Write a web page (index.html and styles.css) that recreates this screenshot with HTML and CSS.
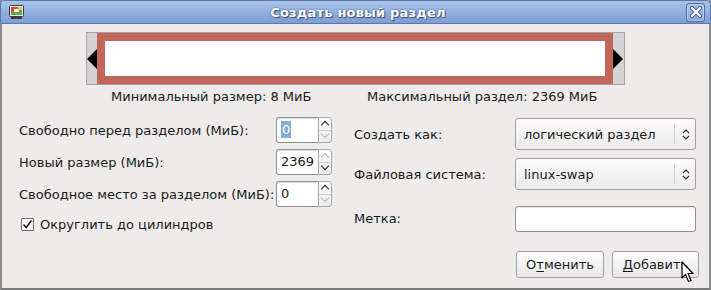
FILE: index.html
```html
<!DOCTYPE html>
<html>
<head>
<meta charset="utf-8">
<link rel="stylesheet" href="styles.css">
</head>
<body>
<div class="window">
  <div class="titlebar">
    <svg class="app-icon" width="15" height="14" viewBox="0 0 15 14">
      <rect x="0.5" y="0.5" width="14" height="11" rx="1" fill="#e8e8e8" stroke="#3a3a3a"/>
      <rect x="2" y="2" width="11" height="8" fill="#5fa84a"/>
      <rect x="2" y="2" width="6" height="5" fill="#d9493a"/>
      <rect x="5" y="4" width="5" height="3" fill="#f2f2f2"/>
      <rect x="9" y="2" width="4" height="3" fill="#e9c35a"/>
      <rect x="2" y="12" width="11" height="2" fill="#3a3a3a"/>
    </svg>
    <div class="title">Создать новый раздел</div>
    <div class="close-btn">
      <svg width="12" height="12" viewBox="0 0 12 12">
        <path d="M2 2 L10 10 M10 2 L2 10" stroke="#3f5f92" stroke-width="4" stroke-linecap="round"/>
        <path d="M2 2 L10 10 M10 2 L2 10" stroke="#ffffff" stroke-width="2.2" stroke-linecap="round"/>
      </svg>
    </div>
  </div>
  <div class="content">
    <div class="disk">
      <div class="handle"><span class="arrow-left"></span></div>
      <div class="part"><div class="part-inner"></div></div>
      <div class="handle handle-right"><span class="arrow-right"></span></div>
    </div>
    <div class="info">
      <span class="info-min">Минимальный размер: 8 МиБ</span>
      <span class="info-max">Максимальный раздел: 2369 МиБ</span>
    </div>
    <div class="form">
      <div class="left-grid">
        <label class="lbl">Свободно перед разделом (МиБ):</label>
        <div class="spin">
          <div class="spin-entry"><span class="sel">0</span></div>
          <div class="spin-btns">
            <span class="sb up on"></span>
            <span class="sb down off"></span>
          </div>
        </div>
        <label class="lbl">Новый размер (МиБ):</label>
        <div class="spin">
          <div class="spin-entry">2369</div>
          <div class="spin-btns">
            <span class="sb up off"></span>
            <span class="sb down on"></span>
          </div>
        </div>
        <label class="lbl">Свободное место за разделом (МиБ):</label>
        <div class="spin">
          <div class="spin-entry">0</div>
          <div class="spin-btns">
            <span class="sb up on"></span>
            <span class="sb down off"></span>
          </div>
        </div>
        <div class="check-row">
          <span class="checkbox">
            <svg width="11" height="11" viewBox="0 0 11 11"><path d="M1.5 5.5 L4.2 8.5 L9.5 1.5" fill="none" stroke="#1a1a1a" stroke-width="1.6"/></svg>
          </span>
          <span>Округлить до цилиндров</span>
        </div>
      </div>
      <div class="right-grid">
        <label class="lbl">Создать как:</label>
        <div class="combo">
          <span class="combo-text">логический раздел</span>
          <span class="combo-sep"></span>
          <svg class="combo-arrows" width="8" height="13" viewBox="0 0 8 13"><path d="M1 5 L4 2 L7 5 M1 8 L4 11 L7 8" fill="none" stroke="#2e2e2e" stroke-width="1.2"/></svg>
        </div>
        <label class="lbl">Файловая система:</label>
        <div class="combo">
          <span class="combo-text">linux-swap</span>
          <span class="combo-sep"></span>
          <svg class="combo-arrows" width="8" height="13" viewBox="0 0 8 13"><path d="M1 5 L4 2 L7 5 M1 8 L4 11 L7 8" fill="none" stroke="#2e2e2e" stroke-width="1.2"/></svg>
        </div>
        <label class="lbl lbl-label">Метка:</label>
        <div class="entry lbl-entry"></div>
      </div>
    </div>
    <div class="buttons">
      <div class="btn">О<u>т</u>менить</div>
      <div class="btn btn-add"><u>Д</u>обавить
        <svg class="cursor" width="14" height="22" viewBox="0 0 14 22"><path d="M1 1 L1 17 L4.5 13.5 L7.5 20.5 L10 19.5 L7 12.5 L12 12.5 Z" fill="#ffffff" stroke="#000000" stroke-width="1.2" stroke-linejoin="round"/></svg>
      </div>
    </div>
  </div>
</div>
</body>
</html>
```
FILE: styles.css
```css
* { box-sizing: border-box; }
html, body { margin: 0; padding: 0; }
body {
  width: 711px;
  height: 290px;
  overflow: hidden;
  background: #edeceb;
  font-family: "DejaVu Sans", sans-serif;
  font-size: 13px;
  color: #1a1a1a;
}
.window {
  width: 711px;
  height: 290px;
  display: flex;
  flex-direction: column;
  border-left: 2px solid #8c8c8c;
  border-right: 2px solid #8c8c8c;
  border-bottom: 2px solid #7a7a7a;
}
.titlebar {
  height: 24px;
  margin: 0 -2px;
  flex: none;
  display: flex;
  align-items: center;
  padding: 0 5px 0 8px;
  background: linear-gradient(#a9c3e8, #7c9ed5);
  border: 1px solid #5a79ab;
  border-radius: 4px 4px 0 0;
  color: #fff;
}
.app-icon { flex: none; }
.title {
  flex: 1;
  text-align: center;
  font-weight: bold;
  font-size: 13px;
  letter-spacing: 0.2px;
  text-shadow: 0 0 2px #35507e, 1px 1px 1px #35507e;
  padding-left: 6px;
}
.close-btn {
  width: 19px;
  height: 19px;
  border: 1px solid #4e6c9f;
  border-radius: 3px;
  background: linear-gradient(#a4bfe6, #88a8da);
  display: flex;
  align-items: center;
  justify-content: center;
  box-shadow: inset 0 0 0 1px rgba(255,255,255,0.35);
}
.content {
  flex: 1;
  display: flex;
  flex-direction: column;
  padding: 8px 10px 0 14px;
}
.disk {
  margin-left: 70px;
  width: 539px;
  height: 53px;
  border: 1px solid #a3a3a3;
  background: #d3d3d3;
  display: flex;
}
.handle {
  width: 10px;
  flex: none;
  display: flex;
  align-items: center;
}
.handle-right { width: 11px; }
.arrow-left {
  width: 0; height: 0;
  border-top: 10px solid transparent;
  border-bottom: 10px solid transparent;
  border-right: 10px solid #000;
}
.arrow-right {
  width: 0; height: 0;
  border-top: 10px solid transparent;
  border-bottom: 10px solid transparent;
  border-left: 10px solid #000;
}
.part {
  flex: 1;
  background: #c1665b;
  padding: 8px;
}
.part-inner {
  background: #fff;
  height: 100%;
}
.info {
  display: flex;
  height: 16px;
  line-height: 16px;
  margin-top: 4px;
}
.info-min { margin-left: 95px; width: 256px; }
.form {
  display: flex;
  margin-top: 12px;
}
.left-grid {
  display: grid;
  grid-template-columns: 258px 56px;
  grid-template-rows: 26px 26px 26px 20px;
  row-gap: 6px;
  align-items: center;
  margin-left: 2px;
}
.left-grid .lbl { padding-left: 1px; }
.spin {
  display: flex;
  height: 26px;
}
.spin-entry {
  width: 42px;
  background: #fff;
  border: 1px solid #8e8e8e;
  border-right: none;
  border-radius: 3px 0 0 3px;
  padding-left: 4px;
  line-height: 24px;
  box-shadow: inset 0 1px 1px rgba(0,0,0,0.12);
}
.sel {
  background: #86abd9;
  color: #fff;
  display: inline-block;
  line-height: 17px;
  padding: 0 1px;
}
.spin-btns {
  width: 14px;
  display: flex;
  flex-direction: column;
  border: 1px solid #a6a6a6;
  border-radius: 0 3px 3px 0;
  background: linear-gradient(#fcfcfc, #ececec);
}
.sb {
  flex: 1;
  display: flex;
  align-items: center;
  justify-content: center;
}
.sb.up { border-bottom: 1px solid #cdcdcd; }
.sb::after {
  content: "";
  width: 5px;
  height: 5px;
  border-left: 1.6px solid currentColor;
  border-top: 1.6px solid currentColor;
}
.sb.up::after { transform: translateY(1px) rotate(45deg); }
.sb.down::after { transform: translateY(-2px) rotate(225deg); }
.sb.on { color: #1e1e1e; }
.sb.off { color: #b3b3b3; }
.check-row {
  grid-column: 1 / 3;
  display: flex;
  align-items: center;
  gap: 6px;
  padding-left: 3px;
  margin-top: 2px;
}
.checkbox {
  width: 13px;
  height: 13px;
  border: 1px solid #6b6b6b;
  background: #fff;
  border-radius: 1px;
  display: flex;
  align-items: center;
  justify-content: center;
}
.right-grid {
  display: grid;
  grid-template-columns: 161px 181px;
  grid-template-rows: 32px 32px 26px;
  row-gap: 8px;
  align-items: center;
  margin-left: 22px;
  margin-top: 1px;
}
.lbl-label { margin-top: 15px; }
.lbl-entry { margin-top: 16px; }
.combo {
  height: 32px;
  border: 1px solid #a1a1a1;
  border-radius: 3px;
  background: linear-gradient(#fbfbfb, #ebebeb);
  display: flex;
  align-items: center;
  padding: 0 5px 0 8px;
}
.combo-text { flex: 1; }
.combo-sep {
  width: 1px;
  height: 20px;
  background: #cfcfcf;
  margin-right: 7px;
}
.combo-arrows { flex: none; }
.entry {
  height: 26px;
  background: #fff;
  border: 1px solid #8e8e8e;
  border-radius: 3px;
  box-shadow: inset 0 1px 1px rgba(0,0,0,0.1);
}
.buttons {
  display: flex;
  justify-content: flex-end;
  gap: 8px;
  margin-top: auto;
  margin-bottom: 10px;
}
.btn {
  height: 27px;
  width: 88px;
  text-align: center;
  border: 1px solid #a0a0a0;
  border-radius: 3px;
  background: linear-gradient(#fdfdfd, #e7e7e7);
  line-height: 25px;
  position: relative;
}
.btn u { text-underline-offset: 2px; }
.btn-add { width: 87px; }
.cursor {
  position: absolute;
  left: 68px;
  top: 9px;
}
```
